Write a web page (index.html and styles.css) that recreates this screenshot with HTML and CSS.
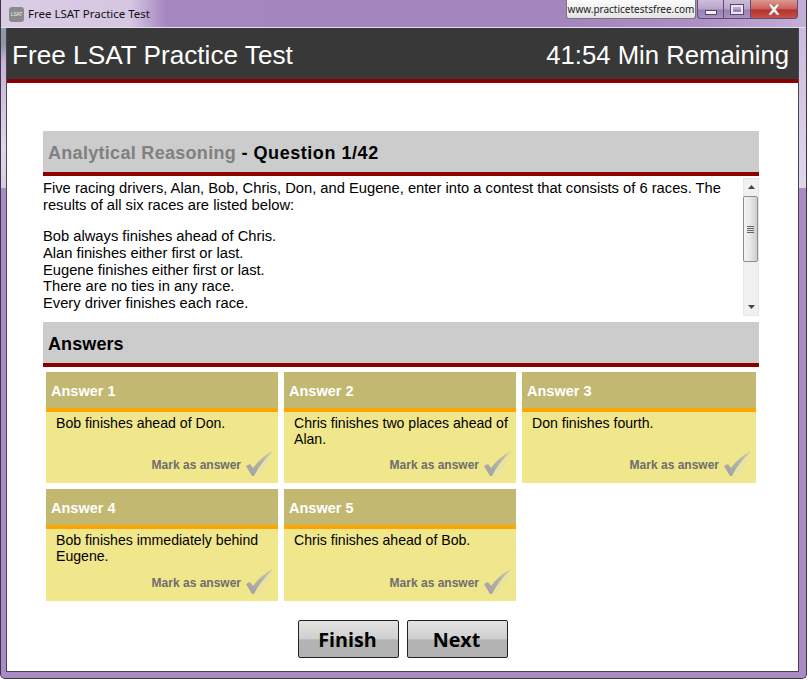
FILE: index.html
```html
<!DOCTYPE html>
<html lang="en">
<head>
<meta charset="utf-8">
<title>Free LSAT Practice Test</title>
<link rel="stylesheet" href="styles.css">
</head>
<body>
<div class="frame">
  <div class="titlebar">
    <span class="app-icon">LSAT</span>
    <span class="title-text">Free LSAT Practice Test</span>
    <div class="site-tip">www.practicetestsfree.com</div>
    <div class="caption">
      <span class="cap cap-min"><i class="min-glyph"></i></span>
      <span class="cap cap-max"><i class="max-glyph"></i></span>
      <span class="cap cap-close">
        <svg width="14" height="11" viewBox="0 0 14 11"><path d="M1 0h3.500l2.500 3 2.500-3h3.500l-4 5.500 4 5.500h-3.500l-2.500-3-2.500 3h-3.500l4-5.500z" fill="#f4f0f0" stroke="#7d4a48" stroke-width=".5"/></svg>
      </span>
    </div>
  </div>
  <div class="client">
    <header class="app-header">
      <span>Free LSAT Practice Test</span>
      <span class="time-left">41:54 Min Remaining</span>
    </header>
    <main class="content">
      <h2 class="section-head"><span class="muted">Analytical Reasoning</span> <span class="qnum">- Question 1/42</span></h2>
      <div class="question">
        <div class="question-text">
          <p>Five racing drivers, Alan, Bob, Chris, Don, and Eugene, enter into a contest that consists of 6 races. The results of all six races are listed below:</p>
          <p>Bob always finishes ahead of Chris.<br>Alan finishes either first or last.<br>Eugene finishes either first or last.<br>There are no ties in any race.<br>Every driver finishes each race.</p>
        </div>
        <div class="scrollbar">
          <svg class="arrow" width="7" height="4" viewBox="0 0 7 4"><path d="M3.500 0l3.500 4h-7z" fill="#444"/></svg>
          <div class="thumb"><i></i><i></i><i></i><i></i></div>
          <svg class="arrow arrow-down" width="7" height="4" viewBox="0 0 7 4"><path d="M0 0h7l-3.500 4z" fill="#444"/></svg>
        </div>
      </div>
      <h2 class="section-head answers-head">Answers</h2>
      <div class="cards">
        <article class="card">
          <h3>Answer 1</h3>
          <p>Bob finishes ahead of Don.</p>
          <div class="mark">Mark as answer <svg width="28" height="28" viewBox="0 0 28 28"><use href="#tick-shade"/><use href="#tick"/></svg></div>
        </article>
        <article class="card">
          <h3>Answer 2</h3>
          <p>Chris finishes two places ahead of Alan.</p>
          <div class="mark">Mark as answer <svg width="28" height="28" viewBox="0 0 28 28"><use href="#tick-shade"/><use href="#tick"/></svg></div>
        </article>
        <article class="card">
          <h3>Answer 3</h3>
          <p>Don finishes fourth.</p>
          <div class="mark">Mark as answer <svg width="28" height="28" viewBox="0 0 28 28"><use href="#tick-shade"/><use href="#tick"/></svg></div>
        </article>
        <article class="card">
          <h3>Answer 4</h3>
          <p>Bob finishes immediately behind Eugene.</p>
          <div class="mark">Mark as answer <svg width="28" height="28" viewBox="0 0 28 28"><use href="#tick-shade"/><use href="#tick"/></svg></div>
        </article>
        <article class="card">
          <h3>Answer 5</h3>
          <p>Chris finishes ahead of Bob.</p>
          <div class="mark">Mark as answer <svg width="28" height="28" viewBox="0 0 28 28"><use href="#tick-shade"/><use href="#tick"/></svg></div>
        </article>
      </div>
      <div class="actions">
        <button class="btn">Finish</button>
        <button class="btn">Next</button>
      </div>
    </main>
  </div>
</div>
<svg width="0" height="0" class="defs">
  <defs>
    <linearGradient id="tg" x1="0" y1="1" x2="1" y2="0">
      <stop offset="0" stop-color="#a0a0a0"/>
      <stop offset=".6" stop-color="#b4b4ac"/>
      <stop offset="1" stop-color="#cfcba0"/>
    </linearGradient>
    <path id="tick" d="M0 15l4-2 3 4C12 10 19 4 27 0 20 7 13 15 8 25H6z" fill="url(#tg)"/>
    <path id="tick-shade" d="M9 26C14 16 21 7 27 0 24 9 18 18 12 26z" fill="#e8e2a8"/>
  </defs>
</svg>
</body>
</html>
```
FILE: styles.css
```css
* { box-sizing: border-box; }
html, body { margin: 0; padding: 0; background: #fff; }
body { width: 808px; height: 680px; overflow: hidden; font-family: "Liberation Sans", Arial, sans-serif; }

.frame {
  width: 807px;
  height: 679px;
  padding: 0 7px 6px 5px;
  border: 1px solid #3c3644;
  border-top: 0;
  border-radius: 0 0 5px 5px;
  background:
    linear-gradient(#8f99a4 0, #8f99a4 45px, #c6b4d8 62px, #e0d6ea 150px, #d9cbe6 188px, transparent 188px) left top / 6px 100% no-repeat,
    linear-gradient(#c8b4d8 0, #d9cbe6 120px, #e0d6ea 188px, #a98ac4 188px, #a98ac4 100%);
  display: flex;
  flex-direction: column;
}
.titlebar {
  height: 28px;
  margin: 0 -7px 0 -5px;
  padding: 0 0 0 8px;
  flex: none;
  display: flex;
  align-items: flex-start;
  background: linear-gradient(90deg, #d9cde4 0, #d5c6e2 130px, #a686bf 165px, #a585bd 560px, #ad90c6 700px, #c4afd9 100%);
  border-bottom: 1px solid #e6dcee;
}
.app-icon {
  width: 15px;
  height: 15px;
  margin-top: 7px;
  border-radius: 3px;
  background: #8a8a8a;
  color: #eee;
  font-size: 5px;
  line-height: 15px;
  text-align: center;
  letter-spacing: -.2px;
}
.title-text {
  margin: 6px 0 0 4px;
  font: 11.5px/15px "Noto Sans", sans-serif;
  color: #111;
}
.site-tip {
  margin-left: auto;
  width: 130px;
  height: 19px;
  border: 1px solid #777;
  border-top: 0;
  border-radius: 0 0 3px 3px;
  background: linear-gradient(#fbfbfb, #e4e4e4);
  font: 10px/18px "Noto Sans", sans-serif;
  color: #222;
  text-align: center;
  white-space: nowrap;
}
.caption { display: flex; height: 19px; margin-right: 8px; margin-left: 1px; }
.cap {
  display: flex;
  align-items: center;
  justify-content: center;
  border: 1px solid #5e4f6e;
  border-top: 0;
  border-left-width: 0;
  background: linear-gradient(#cdbddc, #b9a4cd 50%, #9a7fb2 55%, #a993c0);
}
.cap-min { width: 27px; border-left-width: 1px; border-radius: 0 0 0 4px; }
.cap-max { width: 27px; }
.cap-close { width: 47px; border-radius: 0 0 4px 0; background: linear-gradient(#dc9a92, #c9605a 50%, #b5302b 55%, #c6534c); }
.min-glyph { width: 12px; height: 5px; margin-top: 7px; background: #f2f2f2; border: 1px solid #55486a; }
.max-glyph { width: 12px; height: 9px; border: 2px solid #e8e8f0; outline: 1px solid #55486a; outline-offset: 0; }

.client {
  flex: 1;
  display: flex;
  flex-direction: column;
  background: #fff;
  border: 1px solid #4a4452;
  border-top: 0;
}
.app-header {
  height: 55px;
  flex: none;
  padding: 3px 9px 0 5px;
  display: flex;
  justify-content: space-between;
  align-items: center;
  background: #383838;
  border-bottom: 4px solid #8b0000;
  color: #fff;
  font-size: 26.2px;
}
.time-left { font-size: 25.7px; }
.content { padding: 48px 39px 0 36px; flex: 1; }
.section-head {
  margin: 0;
  height: 45px;
  padding: 3px 0 0 5px;
  display: flex;
  align-items: center;
  gap: .3em;
  background: #ccc;
  border-bottom: 4px solid #8b0000;
  font-size: 18px;
  font-weight: bold;
  letter-spacing: .3px;
  color: #000;
}
.muted { color: #808080; }
.qnum { letter-spacing: .55px; }
.answers-head { margin-top: 6px; letter-spacing: .1px; }
.question { display: flex; height: 138px; margin-top: 2px; }
.question-text { flex: 1; padding-top: 2px; font-size: 14.72px; line-height: 16.75px; color: #000; }
.question-text p { margin: 0 0 14.5px; }
.scrollbar {
  width: 16px;
  flex: none;
  position: relative;
  background: #f0f0f0;
  border: 1px solid #e6e6e6;
  display: flex;
  flex-direction: column;
  align-items: center;
}
.arrow { margin-top: 6px; flex: none; }
.arrow-down { margin-top: auto; margin-bottom: 6px; }
.thumb {
  width: 15px;
  height: 66px;
  margin-top: 7px;
  margin-left: -1px;
  border: 1px solid #8e8e8e;
  border-radius: 2px;
  background: linear-gradient(90deg, #f4f4f4, #e8e8e8 45%, #cfcfcf);
  display: flex;
  flex-direction: column;
  justify-content: center;
  align-items: center;
  gap: 1px;
}
.thumb i { width: 7px; height: 1px; background: #666; }

.cards {
  display: grid;
  grid-template-columns: 232px 232px 234px;
  grid-template-rows: 111px 112px;
  gap: 6px;
  margin: 5px 0 0 3px;
}
.card { background: #f0e68c; display: flex; flex-direction: column; }
.card h3 {
  margin: 0;
  height: 40px;
  padding: 2px 0 0 5px;
  display: flex;
  align-items: center;
  flex: none;
  background: #c2b871;
  border-bottom: 4px solid #ffa500;
  color: #fff;
  font-size: 14.5px;
  font-weight: bold;
}
.card p { margin: 3px 6px 0 10px; font-size: 14.1px; line-height: 16px; color: #000; }
.mark {
  margin-top: auto;
  padding: 0 4px 4px 0;
  display: flex;
  justify-content: flex-end;
  align-items: center;
  gap: 5px;
  color: #6e6e6e;
  font-size: 12px;
  font-weight: bold;
}
.actions { display: flex; justify-content: center; gap: 8px; margin-top: 19px; padding-left: 4px; }
.btn {
  width: 101px;
  height: 38px;
  padding: 2px 2px 0 0;
  border: 1px solid #222;
  border-radius: 2px;
  background: linear-gradient(#e3e3e3, #cfcfcf 50%, #b4b4b4 52%, #b2b2b2);
  color: #000;
  font: bold 19.7px/1 "Open Sans", sans-serif;
}
.defs { position: absolute; }
```
